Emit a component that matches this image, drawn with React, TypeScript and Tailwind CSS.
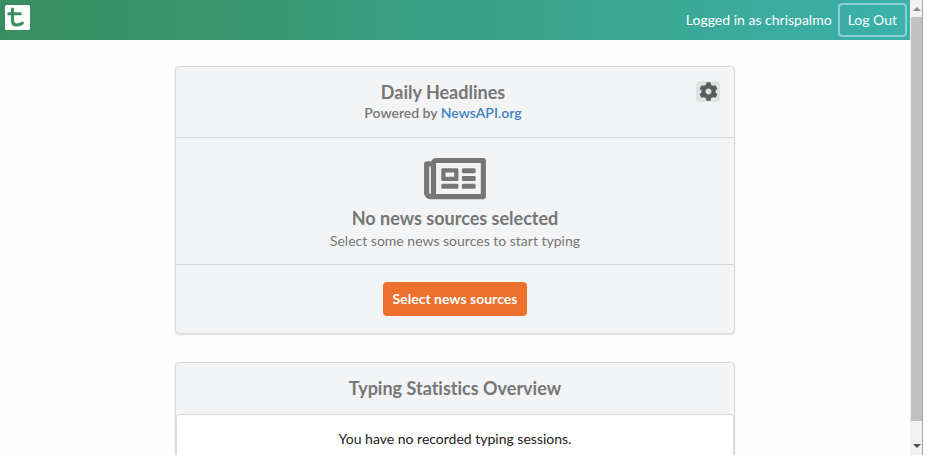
import type { ReactNode } from 'react';
import { FaCog, FaRegNewspaper } from 'react-icons/fa';

function Logo() {
  return (
    <svg viewBox="0 0 25 25" className="block size-[25px]" role="img" aria-label="Typing practice home">
      <rect width="25" height="25" rx="1.5" fill="#fff" />
      <path
        d="M7.5 4V16Q7.5 20 11.5 20Q15.5 20 17.3 18.2M3.8 8.8H15.3"
        fill="none"
        stroke="#38905f"
        strokeWidth="3.1"
        strokeLinecap="round"
        strokeLinejoin="round"
      />
    </svg>
  );
}

function NavBar() {
  return (
    <header className="flex h-10 items-center justify-between bg-linear-to-r from-[#388e5e] to-[#3bb1aa] pr-[3px] pl-[5px]">
      <a href="#home" className="-mt-[5px]">
        <Logo />
      </a>
      <div className="flex items-center gap-[6px] text-white">
        <span>Logged in as chrispalmo</span>
        <button type="button" className="h-[34px] rounded-[4px] border-2 border-[#8acfd3] px-2">
          Log Out
        </button>
      </div>
    </header>
  );
}

function Card({ children }: { children: ReactNode }) {
  return (
    <section className="rounded-[4px] border border-[#d9dadc] bg-[#f3f4f5] text-center shadow-[0_1px_2px_0_rgba(34,36,38,0.15)]">
      {children}
    </section>
  );
}

function ScrollBar() {
  return (
    <div className="flex w-[13px] shrink-0 flex-col items-center border-r border-[#a3a3a3] bg-[#f1f1f1] pl-px" aria-hidden="true">
      <div className="flex h-[17px] shrink-0 items-center">
        <svg viewBox="0 0 8 4" className="h-1 w-2">
          <path d="M0 4L4 0L8 4Z" fill="#8b8b8b" />
        </svg>
      </div>
      <div className="w-full flex-1 bg-[#c1c1c1]" />
      <div className="flex h-[34px] shrink-0 items-end pb-[7px]">
        <svg viewBox="0 0 8 4" className="h-1 w-2">
          <path d="M0 0L4 4L8 0Z" fill="#505050" />
        </svg>
      </div>
    </div>
  );
}

export default function App() {
  return (
    <div className="flex h-screen overflow-hidden bg-[#fefefe] pr-1 font-['Lato',sans-serif] text-sm leading-5 text-[#222] [font-variant-ligatures:none]">
      <div className="min-w-0 flex-1">
        <NavBar />
        <main className="mx-auto flex max-w-[560px] flex-col gap-7 pt-[26px]">
          <Card>
            <div className="flex items-start border-b border-[#d4d5d6] p-[14px] text-[#767676]">
              <div className="flex-1">
                <h2 className="text-lg leading-[22px] font-bold">Daily Headlines</h2>
                <p className="font-semibold">
                  Powered by{' '}
                  <a href="#newsapi" className="text-[#4183c4]">
                    NewsAPI.org
                  </a>
                </p>
              </div>
              <button
                type="button"
                aria-label="News settings"
                className="flex h-[21px] w-6 items-center justify-center rounded-[4px] bg-[#e0e1e2] text-[#5a5b5c]"
              >
                <FaCog className="size-[19px]" />
              </button>
            </div>
            <div className="flex flex-col items-center border-b border-[#d4d5d6] py-[13px] text-[#767676]">
              <FaRegNewspaper className="h-[55px] w-[62px]" />
              <h3 className="text-lg leading-6 font-bold">No news sources selected</h3>
              <p className="pt-px">Select some news sources to start typing</p>
            </div>
            <div className="py-[17px]">
              <button type="button" className="h-[34px] rounded-[4px] bg-[#ed702d] px-[10px] font-bold text-white">
                Select news sources
              </button>
            </div>
          </Card>
          <Card>
            <h2 className="pt-[14px] pb-[15px] text-lg leading-[22px] font-bold text-[#767676]">Typing Statistics Overview</h2>
            <div className="rounded-[4px] border border-[#d9dadc] bg-white py-[14px]">
              <p>You have no recorded typing sessions.</p>
            </div>
          </Card>
        </main>
      </div>
      <ScrollBar />
    </div>
  );
}
